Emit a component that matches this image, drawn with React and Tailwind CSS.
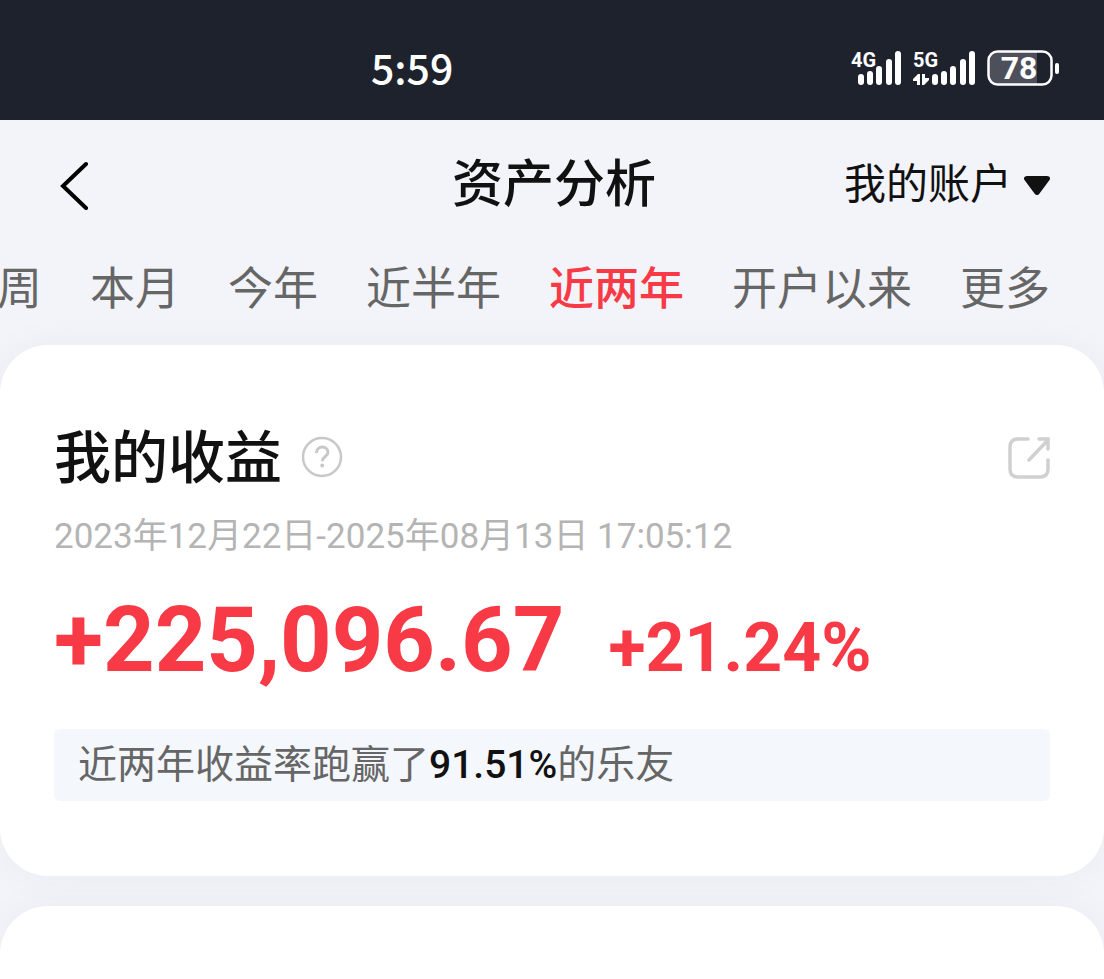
import { useState } from 'react';

const periods = ['周', '本月', '今年', '近半年', '近两年', '开户以来', '更多'];

function SignalBars() {
  return (
    <g>
      <rect x="0" y="24" width="6" height="11" rx="3" />
      <rect x="9" y="21" width="6" height="14" rx="3" />
      <rect x="18" y="16" width="6" height="19" rx="3" />
      <rect x="28" y="9" width="6" height="26" rx="3" />
      <rect x="37" y="1" width="6" height="34" rx="3" />
    </g>
  );
}

function StatusBar() {
  return (
    <div className="flex h-[120px] items-end justify-between bg-[#1e222d] pr-11 pb-[34px] pl-[371px] text-white">
      <span className="text-[41px] leading-10 font-medium">5:59</span>
      <div className="flex items-center gap-3 font-['Roboto','Noto_Sans_CJK_SC',sans-serif]">
        <div className="relative h-9 w-[50px]">
          <span className="absolute top-0 left-0 text-xl leading-5 font-bold">4G</span>
          <svg className="h-9 w-full" viewBox="-7 0 50 36" fill="currentColor">
            <SignalBars />
          </svg>
        </div>
        <div className="relative h-9 w-[62px]">
          <span className="absolute top-0 left-0 text-xl leading-5 font-bold">5G</span>
          <svg className="h-9 w-full" viewBox="-19 0 62 36" fill="currentColor">
            <SignalBars />
            <path d="M-12 35V24h-2l-5 5v2h4v4ZM-10 24v11h2l5-5v-2h-4v-4Z" />
          </svg>
        </div>
        <div className="relative h-9 w-[73px]">
          <svg className="h-9 w-full" viewBox="0 0 73 36" fill="none">
            <path d="M11 2h39v32H11a8 8 0 0 1-9-8V10a8 8 0 0 1 9-8Z" fill="#4d505a" />
            <rect x="1.500" y="1.500" width="63" height="33" rx="9" stroke="white" strokeWidth="2.500" />
            <rect x="68" y="13" width="4" height="11" rx="2" fill="white" />
          </svg>
          <span className="absolute top-0 left-0 w-[64px] text-center text-[32px] leading-9 font-bold">78</span>
        </div>
      </div>
    </div>
  );
}

function Header() {
  return (
    <header className="grid h-[130px] grid-cols-[1fr_auto_1fr] items-center pr-[54px] pl-[58px] text-[#111]">
      <button type="button" aria-label="返回" className="justify-self-start">
        <svg className="h-[50px] w-8" viewBox="0 0 32 50" fill="none" stroke="#000" strokeWidth="4" strokeLinecap="round" strokeLinejoin="miter">
          <path d="M28 4 5 26 28 48" />
        </svg>
      </button>
      <h1 className="pb-2.5 text-[51px] leading-[60px] font-medium">资产分析</h1>
      <button type="button" className="flex items-center gap-3 justify-self-end text-[42px] leading-[60px]">
        <span className="pb-2">我的账户</span>
        <svg className="h-5 w-[26px]" viewBox="0 0 26 20" fill="currentColor">
          <path d="M3 1h20c2.500 0 4 2 2.500 4L15.500 18.500c-1.500 2-3.500 2-5 0L.5 5C-.8 3 .5 1 3 1Z" />
        </svg>
      </button>
    </header>
  );
}

function PeriodTabs({ active, onChange }) {
  return (
    <nav className="flex h-[95px] items-start justify-end gap-12 overflow-hidden pt-1.5 pr-[54px]">
      {periods.map((period) => (
        <button
          key={period}
          type="button"
          onClick={() => onChange(period)}
          className={`shrink-0 text-[45px] leading-[60px] ${period === active ? 'font-medium text-[#f73a45]' : 'text-[#666]'}`}
        >
          {period}
        </button>
      ))}
    </nav>
  );
}

function ProfitCard() {
  return (
    <section className="rounded-[48px] bg-white px-[54px] pt-20 pb-[75px] shadow-[0_0_40px_rgba(20,30,30,0.04)]">
      <div className="flex items-center justify-between">
        <div className="flex items-center gap-5">
          <h2 className="pb-2 text-[57px] leading-[56px] font-medium text-[#111]">我的收益</h2>
          <button type="button" aria-label="说明">
            <svg className="size-[42px]" viewBox="0 0 42 42" fill="none" stroke="#c8c8c8" strokeWidth="3">
              <circle cx="20" cy="21" r="19" strokeWidth="2.500" />
              <path d="M14.500 17c0-8 11.500-7.500 11.500-.8 0 4.300-5.800 4.800-5.800 9" />
              <circle cx="20.200" cy="29.500" r="1" strokeWidth="2" />
            </svg>
          </button>
        </div>
        <button type="button" aria-label="分享">
          <svg className="size-11" viewBox="0 0 44 44" fill="none" stroke="#d0d0d0" strokeWidth="3.500" strokeLinecap="round">
            <path d="M22 4H12Q4 4 4 12v22q0 8 8 8h22q8 0 8-8V25" />
            <path d="M23 25 42 5M33 4h9v10" />
          </svg>
        </button>
      </div>
      <p className="mt-6 font-['Roboto','Noto_Sans_CJK_SC',sans-serif] text-[35px] leading-[48px] text-[#b4b4b4]">2023年12月22日-2025年08月13日 17:05:12</p>
      <div className="mt-[30px] flex items-baseline gap-11 font-['Roboto',sans-serif] leading-[100px] font-bold text-[#f73a45]">
        <span className="text-[90px]">+225,096.67</span>
        <span className="text-[68px]">+21.24%</span>
      </div>
      <p className="mt-[31px] rounded-md bg-[#f4f7fb] px-6 pb-1 text-[39px] leading-[64px] text-[#666]">
        近两年收益率跑赢了<span className="font-['Roboto',sans-serif] font-medium text-[#111]">91.51%</span>的乐友
      </p>
    </section>
  );
}

export default function App() {
  const [active, setActive] = useState('近两年');

  return (
    <div className="flex min-h-screen flex-col overflow-hidden bg-[#f3f4f9] font-['Noto_Sans_CJK_SC',sans-serif]">
      <StatusBar />
      <Header />
      <PeriodTabs active={active} onChange={setActive} />
      <main className="flex grow flex-col gap-[30px]">
        <ProfitCard />
        <section className="min-h-[73px] grow rounded-t-[48px] bg-white shadow-[0_0_40px_rgba(20,30,30,0.04)]" />
      </main>
    </div>
  );
}
